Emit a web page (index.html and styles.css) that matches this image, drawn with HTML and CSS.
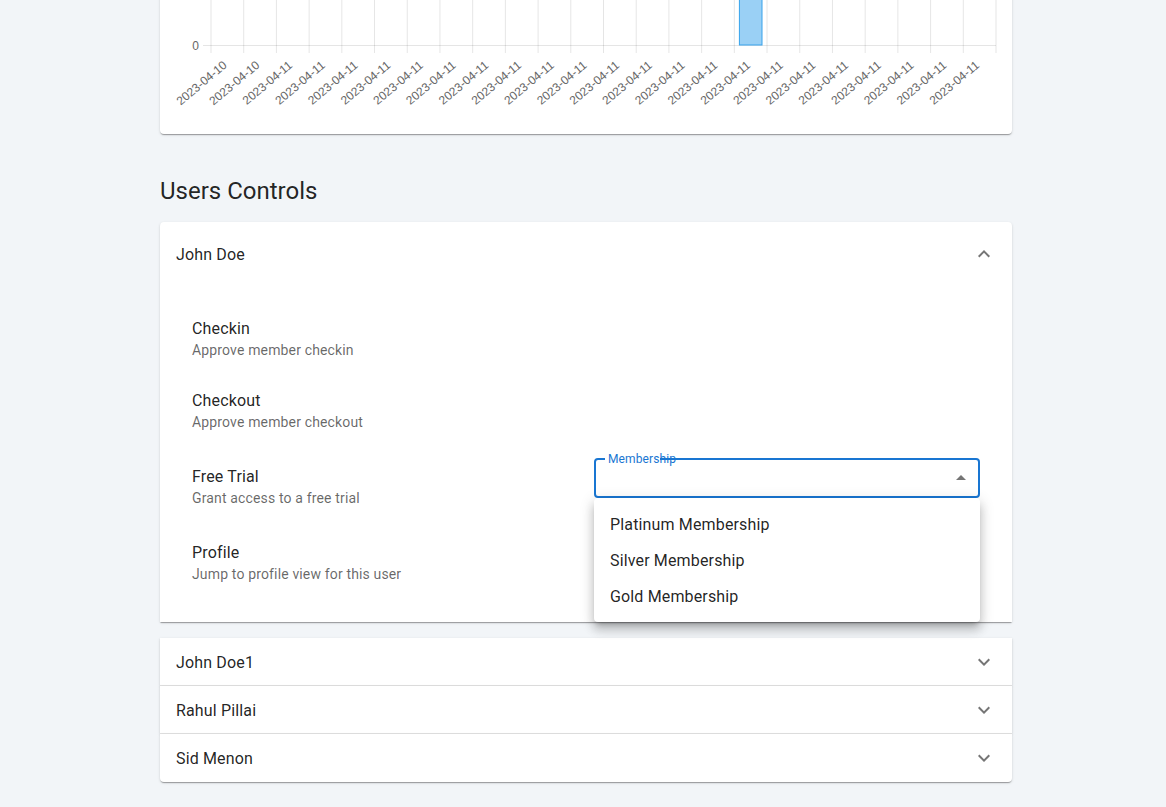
FILE: index.html
```html
<!DOCTYPE html>
<html lang="en">
<head>
<meta charset="utf-8">
<title>Users Controls</title>
<link rel="stylesheet" href="styles.css">
</head>
<body>
<div class="page">
  <div class="chart-card">
    <svg class="chart" width="852" height="144" viewBox="0 -10 852 144" xmlns="http://www.w3.org/2000/svg">
      <g class="grid">
        <line x1="51" y1="-10" x2="51" y2="53"/>
        <line x1="83.71" y1="-10" x2="83.71" y2="53"/>
        <line x1="116.42" y1="-10" x2="116.42" y2="53"/>
        <line x1="149.13" y1="-10" x2="149.13" y2="53"/>
        <line x1="181.83" y1="-10" x2="181.83" y2="53"/>
        <line x1="214.54" y1="-10" x2="214.54" y2="53"/>
        <line x1="247.25" y1="-10" x2="247.25" y2="53"/>
        <line x1="279.96" y1="-10" x2="279.96" y2="53"/>
        <line x1="312.67" y1="-10" x2="312.67" y2="53"/>
        <line x1="345.38" y1="-10" x2="345.38" y2="53"/>
        <line x1="378.08" y1="-10" x2="378.08" y2="53"/>
        <line x1="410.79" y1="-10" x2="410.79" y2="53"/>
        <line x1="443.5" y1="-10" x2="443.5" y2="53"/>
        <line x1="476.21" y1="-10" x2="476.21" y2="53"/>
        <line x1="508.92" y1="-10" x2="508.92" y2="53"/>
        <line x1="541.63" y1="-10" x2="541.63" y2="53"/>
        <line x1="574.33" y1="-10" x2="574.33" y2="53"/>
        <line x1="607.04" y1="-10" x2="607.04" y2="53"/>
        <line x1="639.75" y1="-10" x2="639.75" y2="53"/>
        <line x1="672.46" y1="-10" x2="672.46" y2="53"/>
        <line x1="705.17" y1="-10" x2="705.17" y2="53"/>
        <line x1="737.88" y1="-10" x2="737.88" y2="53"/>
        <line x1="770.58" y1="-10" x2="770.58" y2="53"/>
        <line x1="803.29" y1="-10" x2="803.29" y2="53"/>
        <line x1="836" y1="-10" x2="836" y2="53"/>
        <line x1="43" y1="45.5" x2="836" y2="45.5"/>
      </g>
      <rect class="bar" x="579.4" y="-12" width="22.6" height="57"/>
      <text class="ytick" x="39" y="46">0</text>
      <g class="xticks">
        <text x="65.15" y="63.3" transform="rotate(-40 65.15 63.3)">2023-04-10</text>
        <text x="97.86" y="63.3" transform="rotate(-40 97.86 63.3)">2023-04-10</text>
        <text x="130.57" y="63.3" transform="rotate(-40 130.57 63.3)">2023-04-11</text>
        <text x="163.28" y="63.3" transform="rotate(-40 163.28 63.3)">2023-04-11</text>
        <text x="195.99" y="63.3" transform="rotate(-40 195.99 63.3)">2023-04-11</text>
        <text x="228.7" y="63.3" transform="rotate(-40 228.7 63.3)">2023-04-11</text>
        <text x="261.4" y="63.3" transform="rotate(-40 261.4 63.3)">2023-04-11</text>
        <text x="294.11" y="63.3" transform="rotate(-40 294.11 63.3)">2023-04-11</text>
        <text x="326.82" y="63.3" transform="rotate(-40 326.82 63.3)">2023-04-11</text>
        <text x="359.53" y="63.3" transform="rotate(-40 359.53 63.3)">2023-04-11</text>
        <text x="392.24" y="63.3" transform="rotate(-40 392.24 63.3)">2023-04-11</text>
        <text x="424.95" y="63.3" transform="rotate(-40 424.95 63.3)">2023-04-11</text>
        <text x="457.65" y="63.3" transform="rotate(-40 457.65 63.3)">2023-04-11</text>
        <text x="490.36" y="63.3" transform="rotate(-40 490.36 63.3)">2023-04-11</text>
        <text x="523.07" y="63.3" transform="rotate(-40 523.07 63.3)">2023-04-11</text>
        <text x="555.78" y="63.3" transform="rotate(-40 555.78 63.3)">2023-04-11</text>
        <text x="588.49" y="63.3" transform="rotate(-40 588.49 63.3)">2023-04-11</text>
        <text x="621.2" y="63.3" transform="rotate(-40 621.2 63.3)">2023-04-11</text>
        <text x="653.9" y="63.3" transform="rotate(-40 653.9 63.3)">2023-04-11</text>
        <text x="686.61" y="63.3" transform="rotate(-40 686.61 63.3)">2023-04-11</text>
        <text x="719.32" y="63.3" transform="rotate(-40 719.32 63.3)">2023-04-11</text>
        <text x="752.03" y="63.3" transform="rotate(-40 752.03 63.3)">2023-04-11</text>
        <text x="784.74" y="63.3" transform="rotate(-40 784.74 63.3)">2023-04-11</text>
        <text x="817.45" y="63.3" transform="rotate(-40 817.45 63.3)">2023-04-11</text>
      </g>
    </svg>
  </div>

  <h2 class="section-title">Users Controls</h2>

  <div class="accordion accordion-expanded">
    <div class="summary summary-expanded">
      <span class="summary-title">John Doe</span>
      <svg class="icon" viewBox="0 0 24 24"><path d="m12 8-6 6 1.41 1.41L12 10.83l4.59 4.58L18 14z"/></svg>
    </div>
    <div class="details">
      <ul class="list">
        <li class="item">
          <div class="item-text">
            <div class="primary">Checkin</div>
            <div class="secondary">Approve member checkin</div>
          </div>
        </li>
        <li class="item">
          <div class="item-text">
            <div class="primary">Checkout</div>
            <div class="secondary">Approve member checkout</div>
          </div>
        </li>
        <li class="item">
          <div class="item-text">
            <div class="primary">Free Trial</div>
            <div class="secondary">Grant access to a free trial</div>
          </div>
          <div class="select-wrap">
            <div class="select-outline"></div>
            <span class="notch"></span>
            <label class="select-label">Membership</label>
            <svg class="select-arrow" viewBox="0 0 24 24"><path d="m7 14 5-5 5 5z"/></svg>
            <div class="menu">
              <div class="menu-item">Platinum Membership</div>
              <div class="menu-item">Silver Membership</div>
              <div class="menu-item">Gold Membership</div>
            </div>
          </div>
        </li>
        <li class="item">
          <div class="item-text">
            <div class="primary">Profile</div>
            <div class="secondary">Jump to profile view for this user</div>
          </div>
        </li>
      </ul>
    </div>
  </div>

  <div class="accordion-stack">
    <div class="accordion row">
      <div class="summary">
        <span class="summary-title">John Doe1</span>
        <svg class="icon" viewBox="0 0 24 24"><path d="M16.59 8.59 12 13.17 7.41 8.59 6 10l6 6 6-6z"/></svg>
      </div>
    </div>
    <div class="accordion row divided">
      <div class="summary">
        <span class="summary-title">Rahul Pillai</span>
        <svg class="icon" viewBox="0 0 24 24"><path d="M16.59 8.59 12 13.17 7.41 8.59 6 10l6 6 6-6z"/></svg>
      </div>
    </div>
    <div class="accordion row divided last">
      <div class="summary">
        <span class="summary-title">Sid Menon</span>
        <svg class="icon" viewBox="0 0 24 24"><path d="M16.59 8.59 12 13.17 7.41 8.59 6 10l6 6 6-6z"/></svg>
      </div>
    </div>
  </div>
</div>
</body>
</html>
```

FILE: styles.css
```css
html, body {
  margin: 0;
  padding: 0;
}

body {
  background: #f2f5f8;
  font-family: Roboto, "Noto Sans", "Liberation Sans", sans-serif;
  color: rgba(0, 0, 0, 0.87);
}

.page {
  width: 852px;
  margin-left: 160px;
  padding-bottom: 20px;
}

.chart-card {
  margin-top: -10px;
  background: #fff;
  border-radius: 4px;
  box-shadow: 0px 2px 1px -1px rgba(0,0,0,0.2), 0px 1px 1px 0px rgba(0,0,0,0.14), 0px 1px 3px 0px rgba(0,0,0,0.12);
}

.chart {
  display: block;
}

.grid line {
  stroke: rgba(0, 0, 0, 0.1);
  stroke-width: 1;
}

.bar {
  fill: rgba(54, 162, 235, 0.5);
  stroke: rgb(54, 162, 235);
  stroke-width: 1;
}

.ytick {
  font-family: "Liberation Sans", Arial, sans-serif;
  font-size: 12px;
  fill: #666;
  text-anchor: end;
  dominant-baseline: central;
}

.xticks text {
  font-family: "Liberation Sans", Arial, sans-serif;
  font-size: 12px;
  fill: #666;
  text-anchor: end;
  dominant-baseline: central;
}

.section-title {
  margin: 41px 0 15px;
  font-size: 24px;
  line-height: 32px;
  font-weight: 400;
  color: rgba(0, 0, 0, 0.87);
}

.accordion {
  position: relative;
  background: #fff;
  box-shadow: 0px 2px 1px -1px rgba(0,0,0,0.2), 0px 1px 1px 0px rgba(0,0,0,0.14), 0px 1px 3px 0px rgba(0,0,0,0.12);
}

.accordion-expanded {
  border-radius: 4px 4px 0 0;
  margin-bottom: 16px;
}

.summary {
  display: flex;
  align-items: center;
  justify-content: space-between;
  height: 48px;
  padding: 0 16px;
}

.summary-expanded {
  height: 64px;
}

.summary-title {
  font-size: 16px;
  line-height: 24px;
  padding-top: 2px;
  letter-spacing: 0.00938em;
}

.icon {
  width: 24px;
  height: 24px;
  fill: rgba(0, 0, 0, 0.54);
}

.details {
  padding: 8px 16px 16px;
}

.list {
  list-style: none;
  margin: 0;
  padding: 8px 0;
}

.item {
  display: flex;
  align-items: center;
  padding: 8px 16px;
}

.item-text {
  flex: 1;
  margin: 7px 0 5px;
}

.primary {
  font-size: 16px;
  line-height: 24px;
  letter-spacing: 0.00938em;
  color: rgba(0, 0, 0, 0.87);
}

.secondary {
  font-size: 14px;
  line-height: 20px;
  margin: -1px 0 1px;
  letter-spacing: 0.01071em;
  color: rgba(0, 0, 0, 0.6);
}

.select-wrap {
  position: relative;
  width: 386px;
  height: 40px;
  margin: 4px 0 20px;
}

.select-outline {
  height: 100%;
  box-sizing: border-box;
  border: 2px solid #1976d2;
  border-radius: 4px;
}

.notch {
  position: absolute;
  left: 11px;
  top: 0;
  width: 55px;
  height: 2px;
  background: #fff;
}

.select-label {
  position: absolute;
  left: 14px;
  top: -7px;
  font-size: 12px;
  line-height: 16px;
  letter-spacing: 0.00938em;
  color: #1976d2;
}

.select-arrow {
  position: absolute;
  right: 7px;
  top: 8px;
  width: 24px;
  height: 24px;
  fill: rgba(0, 0, 0, 0.54);
}

.menu {
  position: absolute;
  left: 0;
  top: 40px;
  width: 100%;
  z-index: 10;
  background: #fff;
  border-radius: 4px;
  padding: 8px 0;
  box-shadow: 0px 5px 5px -3px rgba(0,0,0,0.2), 0px 8px 10px 1px rgba(0,0,0,0.14), 0px 3px 14px 2px rgba(0,0,0,0.12);
}

.menu-item {
  padding: 7px 16px 5px;
  font-size: 16px;
  line-height: 24px;
  letter-spacing: 0.00938em;
  color: rgba(0, 0, 0, 0.87);
}

.divided::before {
  content: "";
  position: absolute;
  left: 0;
  right: 0;
  top: -1px;
  height: 1px;
  background: rgba(0, 0, 0, 0.12);
}

.last {
  border-radius: 0 0 4px 4px;
}
```
